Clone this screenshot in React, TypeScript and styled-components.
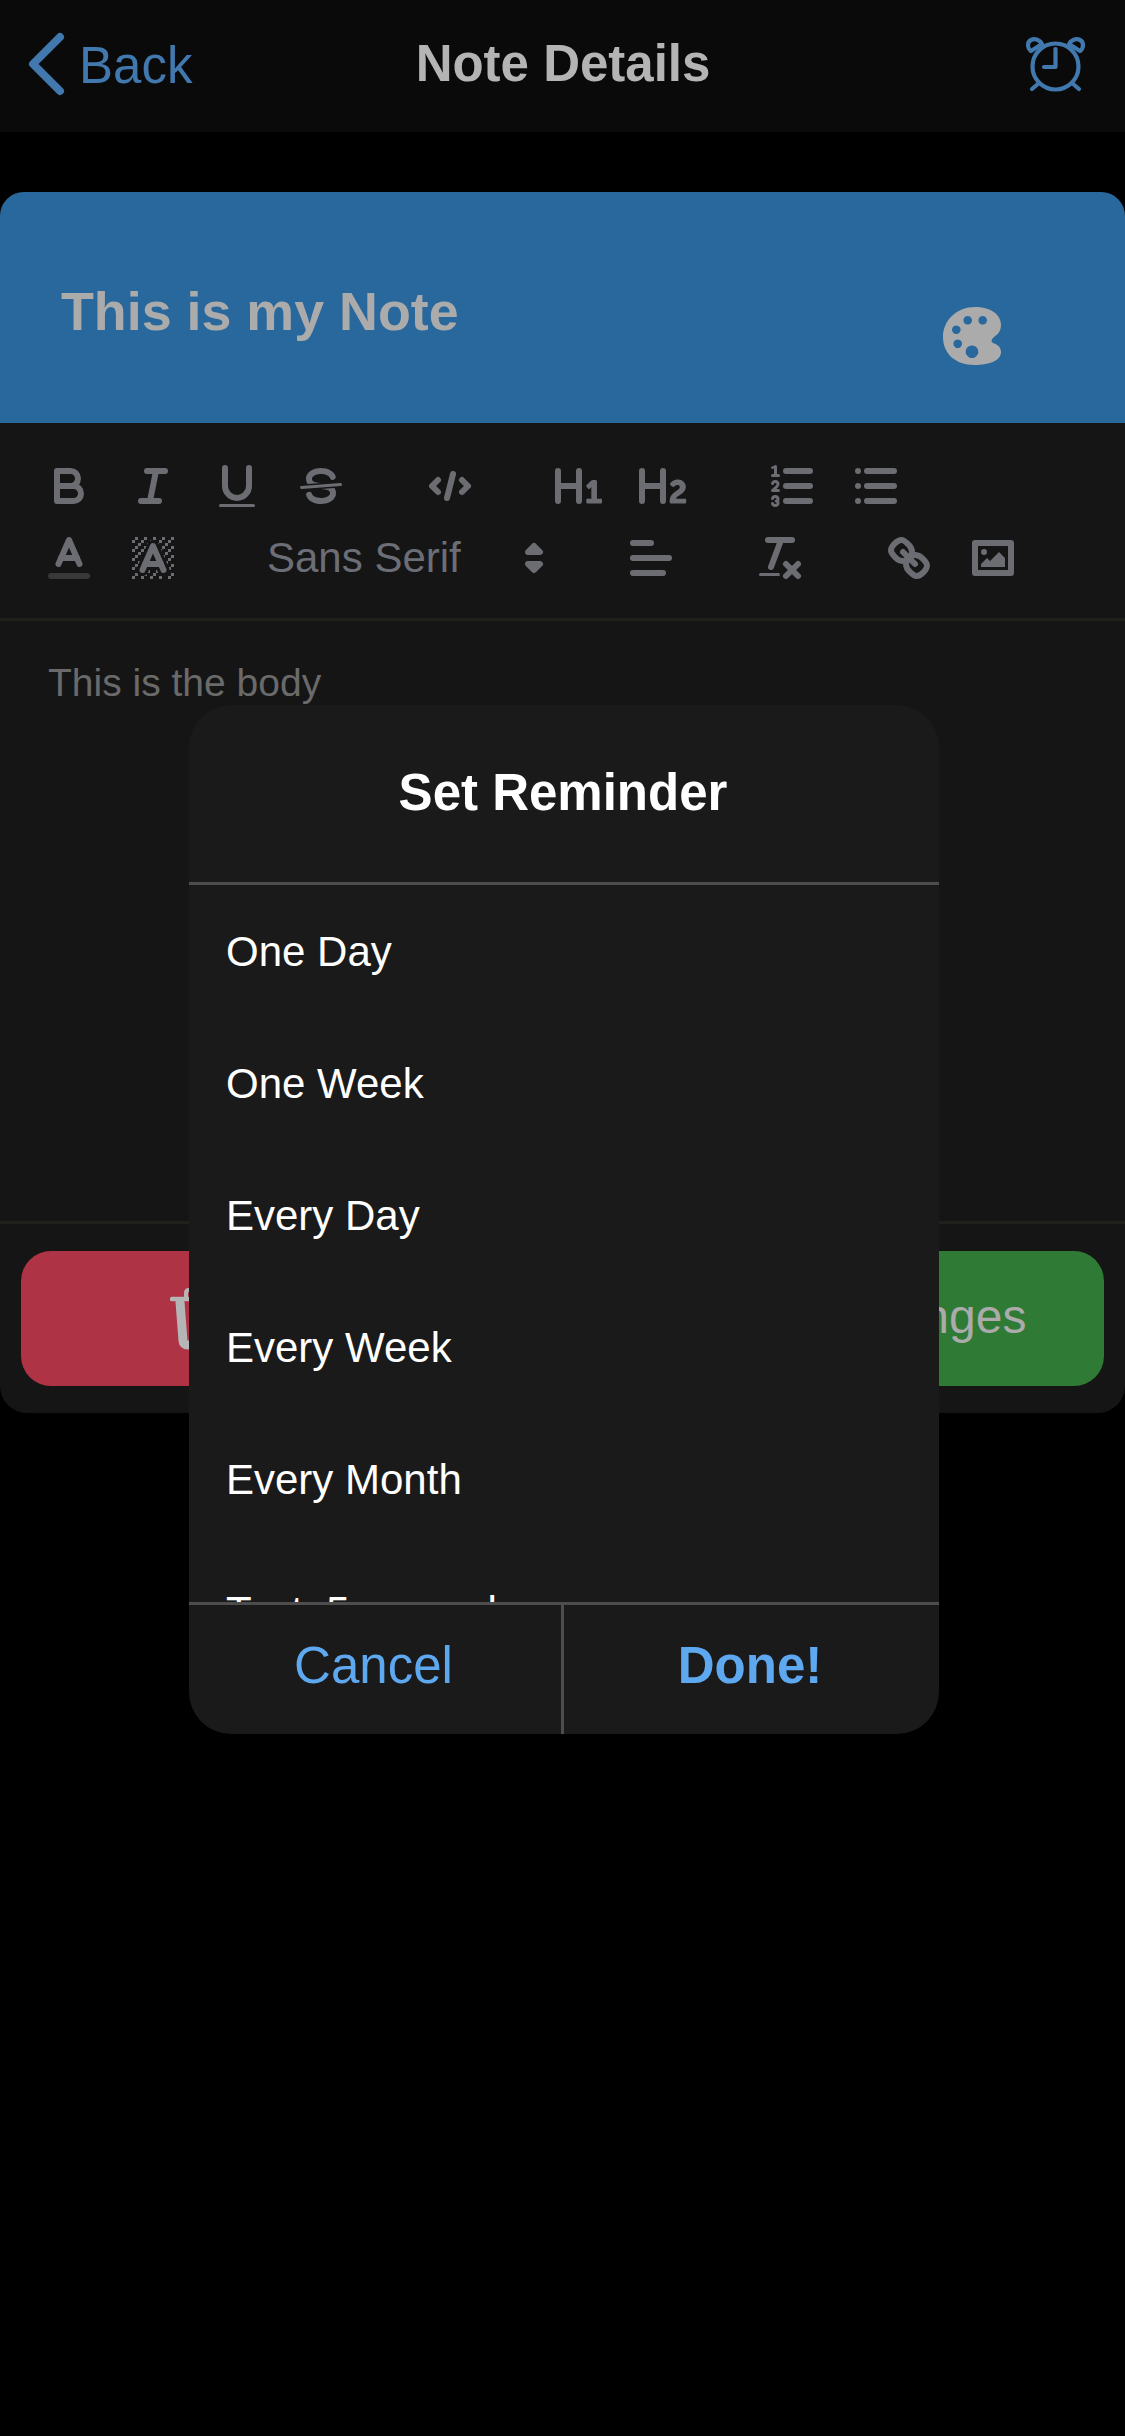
import React from "react";
import styled, { createGlobalStyle } from "styled-components";

const iconGray = "#6c6d72";
const reminderOptions = [
  "One Day",
  "One Week",
  "Every Day",
  "Every Week",
  "Every Month",
  "Test: 5 seconds",
];

const GlobalStyle = createGlobalStyle`
  html, body {
    margin: 0;
    padding: 0;
    background: #000;
  }
  * {
    box-sizing: border-box;
  }
`;

const Screen = styled.div`
  position: relative;
  width: 1125px;
  height: 2436px;
  overflow: hidden;
  background: #000;
  font-family: "Liberation Sans", Arial, sans-serif;
`;

const Header = styled.header`
  display: grid;
  grid-template-columns: 1fr auto 1fr;
  align-items: center;
  height: 132px;
  padding: 0 27px 4px 28px;
  background: #0a0a0a;
`;

const BackLink = styled.div`
  display: flex;
  align-items: center;
  gap: 13px;
  color: #4178ae;
  font-size: 51px;
  line-height: 60px;
`;

const BackLabel = styled.span`
  padding-top: 4px;
`;

const HeaderTitle = styled.h1`
  margin: 0;
  color: #b4b4b4;
  font-size: 51px;
  line-height: 60px;
  font-weight: 700;
`;

const AlarmSlot = styled.div`
  display: flex;
  justify-content: flex-end;
  padding-right: 12px;
`;

const Card = styled.section`
  margin-top: 60px;
  background: #151515;
  border-radius: 24px 24px 27px 27px;
`;

const TitleBar = styled.div`
  display: flex;
  justify-content: space-between;
  height: 231px;
  padding: 89px 124px 0 61px;
  background: #29689c;
  border-radius: 24px 24px 0 0;
`;

const NoteTitle = styled.div`
  color: #ababab;
  font-size: 53.8px;
  line-height: 60px;
  font-weight: 700;
`;

const PaletteSlot = styled.div`
  padding-top: 26px;
`;

const Toolbar = styled.div`
  padding: 27px 0 24px 27px;
  border-bottom: 3px solid #20211c;
`;

const ToolRow = styled.div`
  display: flex;
  height: 72px;
`;

const ToolGroup = styled.div`
  display: flex;
  margin-right: 45px;
`;

const ToolButton = styled.div`
  width: 84px;
  height: 72px;
  padding: 9px 15px;

  svg {
    display: block;
    width: 54px;
    height: 54px;
    fill: none;
    stroke: ${iconGray};
    stroke-width: 2;
    stroke-linecap: round;
    stroke-linejoin: round;
  }
  .fill {
    fill: ${iconGray};
    stroke: none;
  }
  .thin {
    stroke-width: 1;
  }
  .faded {
    opacity: 0.4;
  }
`;

const FontPicker = styled.div`
  display: flex;
  align-items: center;
  justify-content: space-between;
  width: 324px;
  height: 72px;
  padding: 0 3px 0 27px;
  color: #6b6e77;
  font-size: 42px;

  svg {
    display: block;
    width: 54px;
    height: 54px;
    fill: ${iconGray};
    stroke: ${iconGray};
    stroke-width: 2;
    stroke-linejoin: round;
  }
`;

const Editor = styled.div`
  height: 600px;
  padding: 34px 48px;
  color: #6a6a6a;
  font-size: 39px;
  line-height: 55px;
`;

const ActionBar = styled.div`
  display: flex;
  justify-content: space-between;
  padding: 27px 21px;
  border-top: 3px solid #20211c;
`;

const ActionButton = styled.div<{ $color: string; $width: number }>`
  display: flex;
  align-items: center;
  justify-content: center;
  width: ${(props) => props.$width}px;
  height: 135px;
  background: ${(props) => props.$color};
  border-radius: 30px;
  color: #ababab;
  font-size: 48px;
`;

const SaveLabel = styled.span`
  padding: 0 18px 4px 0;
`;

const Backdrop = styled.div`
  position: absolute;
  inset: 0;
  display: flex;
  align-items: center;
  justify-content: center;
  padding: 3px 0 0 3px;
`;

const Modal = styled.div`
  width: 750px;
  background: #1a1a1a;
  border-radius: 42px;
  overflow: hidden;
`;

const ModalTitle = styled.div`
  height: 180px;
  padding: 58px 2px 0 0;
  border-bottom: 3px solid #4d4d4d;
  color: #fff;
  font-size: 51px;
  line-height: 60px;
  font-weight: 700;
  text-align: center;
`;

const OptionList = styled.div`
  height: 717px;
  overflow: hidden;
`;

const OptionRow = styled.div`
  display: flex;
  align-items: center;
  height: 132px;
  padding: 2px 0 0 37px;
  color: #fff;
  font-size: 42px;
`;

const ModalActions = styled.div`
  display: flex;
  height: 132px;
  border-top: 3px solid #4d4d4d;
`;

const ModalAction = styled.div<{ $primary?: boolean }>`
  flex: 0 0 50%;
  display: flex;
  align-items: center;
  justify-content: center;
  padding: 0 3px 8px 0;
  color: #5ea8f0;
  font-size: 51px;
  font-weight: ${(props) => (props.$primary ? 700 : 400)};

  &:first-child {
    border-right: 3px solid #4d4d4d;
  }
`;

const ChevronIcon = () => (
  <svg width="38" height="66" viewBox="0 0 38 66" fill="none" stroke="#4178ae" strokeWidth="8" strokeLinecap="round" strokeLinejoin="round">
    <path d="M32 6 L5 33 L32 60" />
  </svg>
);

const AlarmIcon = () => (
  <svg width="60" height="56" viewBox="0 0 60 56" fill="none" stroke="#4178ae" strokeWidth="4.2" strokeLinecap="round" strokeLinejoin="round">
    <circle cx="29.5" cy="30.5" r="23" />
    <path d="M29.5 13 V31 H18" />
    <path d="M6 53 L13 47 M53 53 L46 47" />
    <path d="M5 15 C1 12 1 6 5 4 C9 2 14 4 16 8 Z" />
    <path d="M54 15 C58 12 58 6 54 4 C50 2 45 4 43 8 Z" />
  </svg>
);

const PaletteIcon = () => (
  <svg width="58" height="58" viewBox="0 0 58 58">
    <path
      fillRule="evenodd"
      fill="#ababab"
      d="M32 0 C47 0 58 7 58 18 C58 26 53 28 50 31 C48 33 48 35 50 36 C53 37 58 39 58 45 C58 53 48 58 31 58 C13 58 0 47 0 30 C0 13 14 0 32 0 Z
         M24.7 9 a4.3 4.3 0 1 0 0.01 0 Z
         M39.7 9 a4.3 4.3 0 1 0 0.01 0 Z
         M13.3 18.4 a4.3 4.3 0 1 0 0.01 0 Z
         M14.7 32.4 a4.3 4.3 0 1 0 0.01 0 Z
         M29 38.4 a6.3 6.3 0 1 0 0.01 0 Z"
    />
  </svg>
);

const TrashIcon = () => (
  <svg width="54" height="62" viewBox="0 0 54 62" fill="none" stroke="#b5b5b5" strokeLinecap="round" strokeLinejoin="round">
    <path d="M2 11 H52" strokeWidth="4.4" />
    <path d="M16 10 V5 Q16 2 19 2 H35 Q38 2 38 5 V10" strokeWidth="4" />
    <path d="M10 14 L13 53 Q13.5 57 18 57 H36 Q40.5 57 41 53 L44 14" strokeWidth="9" />
  </svg>
);

const BoldIcon = () => (
  <svg viewBox="0 0 18 18">
    <path d="M5,4H9.5A2.5,2.5,0,0,1,12,6.5v0A2.5,2.5,0,0,1,9.5,9H5A0,0,0,0,1,5,9V4A0,0,0,0,1,5,4Z" />
    <path d="M5,9h5.5A2.5,2.5,0,0,1,13,11.5v0A2.5,2.5,0,0,1,10.5,14H5a0,0,0,0,1,0,0V9A0,0,0,0,1,5,9Z" />
  </svg>
);

const ItalicIcon = () => (
  <svg viewBox="0 0 18 18">
    <line x1="7" x2="13" y1="4" y2="4" />
    <line x1="5" x2="11" y1="14" y2="14" />
    <line x1="8" x2="10" y1="14" y2="4" />
  </svg>
);

const UnderlineIcon = () => (
  <svg viewBox="0 0 18 18">
    <path d="M5,3V9a4.012,4.012,0,0,0,4,4H9a4.012,4.012,0,0,0,4-4V3" />
    <rect className="fill" height="1" rx="0.5" ry="0.5" width="12" x="3" y="15" />
  </svg>
);

const StrikeIcon = () => (
  <svg viewBox="0 0 18 18">
    <line className="thin" x1="15.5" x2="2.5" y1="8.5" y2="9.5" />
    <path className="fill" d="M9.007,8C6.542,7.791,6,7.519,6,6.5,6,5.792,7.283,5,9,5c1.571,0,2.765.679,2.969,1.309a1,1,0,0,0,1.9-.617C13.356,4.106,11.354,3,9,3,6.2,3,4,4.538,4,6.5a3.2,3.2,0,0,0,.5,1.843Z" />
    <path className="fill" d="M8.984,10C11.457,10.208,12,10.479,12,11.5c0,.708-1.283,1.5-3,1.5-1.571,0-2.765-.679-2.969-1.309a1,1,0,1,0-1.9.617C4.644,13.894,6.646,15,9,15c2.8,0,5-1.538,5-3.5a3.2,3.2,0,0,0-.5-1.843Z" />
  </svg>
);

const CodeIcon = () => (
  <svg viewBox="0 0 18 18">
    <polyline points="5 7 3 9 5 11" />
    <polyline points="13 7 15 9 13 11" />
    <line x1="10" x2="8" y1="5" y2="13" />
  </svg>
);

const HeaderOneIcon = () => (
  <svg viewBox="0 0 18 18">
    <path className="fill" d="M10,4V14a1,1,0,0,1-2,0V10H3v4a1,1,0,0,1-2,0V4A1,1,0,0,1,3,4V8H8V4a1,1,0,0,1,2,0Zm6.06787,9.209H14.98975V7.59863a.54085.54085,0,0,0-.605-.60547h-.62744a1.01119,1.01119,0,0,0-.748.29688L11.645,8.56641a.5435.5435,0,0,0-.022.8584l.28613.30762a.53861.53861,0,0,0,.84717.0332l.09912-.08789a1.2137,1.2137,0,0,0,.2417-.35254h.02246s-.01123.30859-.01123.60547V13.209H12.041a.54085.54085,0,0,0-.605.60547v.43945a.54085.54085,0,0,0,.605.60547h4.02686a.54085.54085,0,0,0,.605-.60547v-.43945A.54085.54085,0,0,0,16.06787,13.209Z" />
  </svg>
);

const HeaderTwoIcon = () => (
  <svg viewBox="0 0 18 18">
    <path className="fill" d="M16.73975,13.81445v.43945a.54085.54085,0,0,1-.605.60547H11.855a.58392.58392,0,0,1-.64893-.60547V14.0127c0-2.90527,3.39941-3.42187,3.39941-4.55469a.77675.77675,0,0,0-.84717-.78125,1.17684,1.17684,0,0,0-.83594.38477c-.2749.26367-.561.374-.85791.13184l-.4292-.34082c-.30811-.24219-.38525-.51758-.1543-.81445a2.97155,2.97155,0,0,1,2.45361-1.17676,2.45393,2.45393,0,0,1,2.68408,2.40918c0,2.45312-3.1792,2.92676-3.27832,3.93848h2.79443A.54085.54085,0,0,1,16.73975,13.81445ZM9,3A.99974.99974,0,0,0,8,4V8H3V4A1,1,0,0,0,1,4V14a1,1,0,0,0,2,0V10H8v4a1,1,0,0,0,2,0V4A.99974.99974,0,0,0,9,3Z" />
  </svg>
);

const OrderedListIcon = () => (
  <svg viewBox="0 0 18 18">
    <line x1="7" x2="15" y1="4" y2="4" />
    <line x1="7" x2="15" y1="9" y2="9" />
    <line x1="7" x2="15" y1="14" y2="14" />
    <line className="thin" x1="2.5" x2="4.5" y1="5.5" y2="5.5" />
    <path className="fill" d="M3.5,6A0.5,0.5,0,0,1,3,5.5V3.085l-0.276.138A0.5,0.5,0,0,1,2.053,3c-0.124-.247-0.023-0.324.224-0.447l1-.5A0.5,0.5,0,0,1,4,2.5v3A0.5,0.5,0,0,1,3.5,6Z" />
    <path className="thin" d="M4.5,10.5h-2c0-.234,1.85-1.076,1.85-2.234A0.959,0.959,0,0,0,2.5,8.156" />
    <path className="thin" d="M2.5,14.846a0.959,0.959,0,0,0,1.85-.109A0.7,0.7,0,0,0,3.75,14a0.688,0.688,0,0,0,.6-0.736,0.959,0.959,0,0,0-1.85-.109" />
  </svg>
);

const BulletListIcon = () => (
  <svg viewBox="0 0 18 18">
    <line x1="6" x2="15" y1="4" y2="4" />
    <line x1="6" x2="15" y1="9" y2="9" />
    <line x1="6" x2="15" y1="14" y2="14" />
    <line x1="3" x2="3" y1="4" y2="4" />
    <line x1="3" x2="3" y1="9" y2="9" />
    <line x1="3" x2="3" y1="14" y2="14" />
  </svg>
);

const ColorIcon = () => (
  <svg viewBox="0 0 18 18">
    <line className="faded" x1="3" x2="15" y1="15" y2="15" />
    <polyline points="5.5 11 9 3 12.5 11" />
    <line x1="11.63" x2="6.38" y1="9" y2="9" />
  </svg>
);

// one unit squares of the checker behind the highlight "A"
const checkerCells = [
  [4, 4], [2, 6], [3, 5], [4, 7], [2, 12], [2, 9], [2, 15], [3, 8], [12, 2], [11, 3],
  [2, 3], [6, 2], [3, 2], [5, 3], [9, 2], [15, 14], [13, 7], [15, 5], [14, 6], [15, 8],
  [14, 9], [14, 3], [15, 2], [12, 5], [13, 4], [9, 14], [8, 15], [5, 15], [11, 15], [14, 15], [15, 11],
];
const checkerPolygons = [
  "6 6.868 6 6 5 6 5 7 5.942 7 6 6.868",
  "6.817 5 6 5 6 6 6.38 6 6.817 5",
  "4 11.439 4 11 3 11 3 12 3.755 12 4 11.439",
  "4.63 10 4 10 4 11 4.192 11 4.63 10",
  "13.447 10.174 13.469 10.225 13.472 10.232 13.808 11 14 11 14 10 13.37 10 13.447 10.174",
  "12 6.868 12 6 11.62 6 12 6.868",
  "12.933 9 13 9 13 8 12.495 8 12.933 9",
];
const checkerPaths = [
  "M10.832,4.2L11,4.582V4H10.708A1.948,1.948,0,0,1,10.832,4.2Z",
  "M7,4.582L7.168,4.2A1.929,1.929,0,0,1,7.292,4H7V4.582Z",
  "M8,13H7.683l-0.351.8a1.933,1.933,0,0,1-.124.2H8V13Z",
  "M9,3H8V3.282A1.985,1.985,0,0,1,9,3Z",
  "M3.775,14H3v1H4V14.314A1.97,1.97,0,0,1,3.775,14Z",
  "M6,14.926V15H7V14.316A1.993,1.993,0,0,1,6,14.926Z",
  "M10.668,13.8L10.317,13H10v1h0.792A1.947,1.947,0,0,1,10.668,13.8Z",
  "M14.332,12.2a1.99,1.99,0,0,1,.166.8H15V12H14.245Z",
];

const BackgroundIcon = () => (
  <svg viewBox="0 0 18 18">
    <g className="fill">
      {checkerCells.map(([x, y]) => (
        <rect key={`${x}-${y}`} height="1" width="1" x={x} y={y} />
      ))}
      {checkerPolygons.map((points) => (
        <polygon key={points} points={points} />
      ))}
      {checkerPaths.map((d) => (
        <path key={d} d={d} />
      ))}
    </g>
    <polyline points="5.5 13 9 5 12.5 13" />
    <line x1="11.63" x2="6.38" y1="11" y2="11" />
  </svg>
);

const PickerArrows = () => (
  <svg viewBox="0 0 18 18">
    <polygon points="7 11 9 13 11 11 7 11" />
    <polygon points="7 7 9 5 11 7 7 7" />
  </svg>
);

const AlignIcon = () => (
  <svg viewBox="0 0 18 18">
    <line x1="3" x2="15" y1="9" y2="9" />
    <line x1="3" x2="13" y1="14" y2="14" />
    <line x1="3" x2="9" y1="4" y2="4" />
  </svg>
);

const CleanIcon = () => (
  <svg viewBox="0 0 18 18">
    <line x1="5" x2="13" y1="3" y2="3" />
    <line x1="6" x2="9.35" y1="12" y2="3" />
    <line x1="11" x2="15" y1="11" y2="15" />
    <line x1="15" x2="11" y1="11" y2="15" />
    <rect className="fill" height="1" rx="0.5" ry="0.5" width="7" x="2" y="14" />
  </svg>
);

const LinkIcon = () => (
  <svg viewBox="0 0 18 18">
    <line x1="7" x2="11" y1="7" y2="11" />
    <path d="M8.9,4.577a3.476,3.476,0,0,1,.36,4.679A3.476,3.476,0,0,1,4.577,8.9C3.185,7.5,2.035,6.4,4.217,4.217S7.5,3.185,8.9,4.577Z" />
    <path d="M13.423,9.1a3.476,3.476,0,0,0-4.679-.36,3.476,3.476,0,0,0,.36,4.679c1.392,1.392,2.5,2.542,4.679.36S14.815,10.5,13.423,9.1Z" />
  </svg>
);

const ImageIcon = () => (
  <svg viewBox="0 0 18 18">
    <rect height="10" width="12" x="3" y="4" />
    <circle className="fill" cx="6" cy="7" r="1" />
    <polyline className="fill" points="5 12 5 11 7 9 8 10 11 7 13 9 13 12 5 12" />
  </svg>
);

const App = () => {
  return (
    <Screen>
      <GlobalStyle />
      <Header>
        <BackLink>
          <ChevronIcon />
          <BackLabel>Back</BackLabel>
        </BackLink>
        <HeaderTitle>Note Details</HeaderTitle>
        <AlarmSlot>
          <AlarmIcon />
        </AlarmSlot>
      </Header>

      <Card>
        <TitleBar>
          <NoteTitle>This is my Note</NoteTitle>
          <PaletteSlot>
            <PaletteIcon />
          </PaletteSlot>
        </TitleBar>

        <Toolbar>
          <ToolRow>
            <ToolGroup>
              <ToolButton><BoldIcon /></ToolButton>
              <ToolButton><ItalicIcon /></ToolButton>
              <ToolButton><UnderlineIcon /></ToolButton>
              <ToolButton><StrikeIcon /></ToolButton>
            </ToolGroup>
            <ToolGroup>
              <ToolButton><CodeIcon /></ToolButton>
            </ToolGroup>
            <ToolGroup>
              <ToolButton><HeaderOneIcon /></ToolButton>
              <ToolButton><HeaderTwoIcon /></ToolButton>
            </ToolGroup>
            <ToolGroup>
              <ToolButton><OrderedListIcon /></ToolButton>
              <ToolButton><BulletListIcon /></ToolButton>
            </ToolGroup>
          </ToolRow>
          <ToolRow>
            <ToolGroup>
              <ToolButton><ColorIcon /></ToolButton>
              <ToolButton><BackgroundIcon /></ToolButton>
            </ToolGroup>
            <ToolGroup>
              <FontPicker>
                Sans Serif
                <PickerArrows />
              </FontPicker>
            </ToolGroup>
            <ToolGroup>
              <ToolButton><AlignIcon /></ToolButton>
            </ToolGroup>
            <ToolGroup>
              <ToolButton><CleanIcon /></ToolButton>
            </ToolGroup>
            <ToolGroup>
              <ToolButton><LinkIcon /></ToolButton>
              <ToolButton><ImageIcon /></ToolButton>
            </ToolGroup>
          </ToolRow>
        </Toolbar>

        <Editor>This is the body</Editor>

        <ActionBar>
          <ActionButton $color="#ae3345" $width={352}>
            <TrashIcon />
          </ActionButton>
          <ActionButton $color="#2f7a34" $width={452}>
            <SaveLabel>Save Changes</SaveLabel>
          </ActionButton>
        </ActionBar>
      </Card>

      <Backdrop>
        <Modal>
          <ModalTitle>Set Reminder</ModalTitle>
          <OptionList>
            {reminderOptions.map((option) => (
              <OptionRow key={option}>{option}</OptionRow>
            ))}
          </OptionList>
          <ModalActions>
            <ModalAction>Cancel</ModalAction>
            <ModalAction $primary>Done!</ModalAction>
          </ModalActions>
        </Modal>
      </Backdrop>
    </Screen>
  );
};

export default App;
